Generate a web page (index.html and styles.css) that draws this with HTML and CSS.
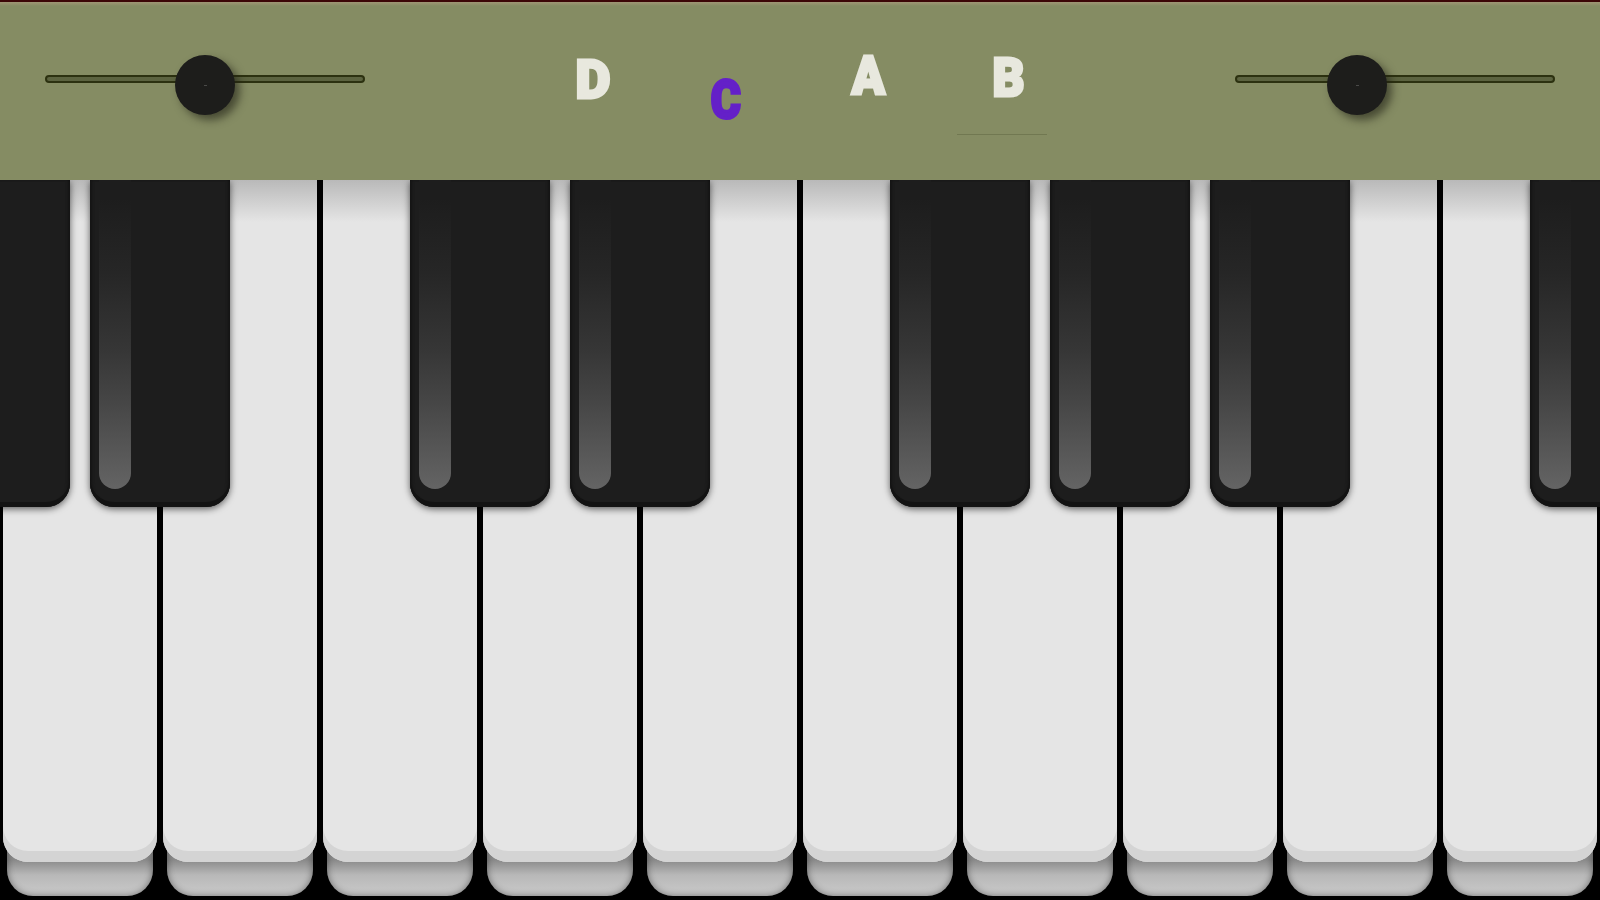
FILE: index.html
```html
<!DOCTYPE html>
<html lang="en">
<head>
<meta charset="utf-8">
<title>Piano</title>
<link rel="stylesheet" href="styles.css">
</head>
<body>
<main class="app">
  <div class="strip"></div>
  <header class="bar">
    <div class="slider"><div class="track"></div><div class="thumb thumb-left"><span class="speck"></span></div></div>
    <div class="notes">
      <div class="note note-d"><span>D</span></div>
      <div class="note note-c"><span>C</span></div>
      <div class="note note-a"><span>A</span></div>
      <div class="note note-b"><span>B</span></div>
    </div>
    <div class="slider slider-end"><div class="track"></div><div class="thumb thumb-right"><span class="speck"></span></div></div>
  </header>
  <section class="keys">
    <div class="whites">
      <div class="white"><div class="face"></div></div>
      <div class="white"><div class="face"></div></div>
      <div class="white"><div class="face"></div></div>
      <div class="white"><div class="face"></div></div>
      <div class="white"><div class="face"></div></div>
      <div class="white"><div class="face"></div></div>
      <div class="white"><div class="face"></div></div>
      <div class="white"><div class="face"></div></div>
      <div class="white"><div class="face"></div></div>
      <div class="white"><div class="face"></div></div>
    </div>
    <div class="blacks">
      <div class="slot"><div class="black"><i class="shine"></i></div></div>
      <div class="slot"><div class="black"><i class="shine"></i></div></div>
      <div class="slot"></div>
      <div class="slot"><div class="black"><i class="shine"></i></div></div>
      <div class="slot"><div class="black"><i class="shine"></i></div></div>
      <div class="slot"></div>
      <div class="slot"><div class="black"><i class="shine"></i></div></div>
      <div class="slot"><div class="black"><i class="shine"></i></div></div>
      <div class="slot"><div class="black"><i class="shine"></i></div></div>
      <div class="slot"></div>
      <div class="slot"><div class="black"><i class="shine"></i></div></div>
    </div>
  </section>
</main>
</body>
</html>
```
FILE: styles.css
```css
* { box-sizing: border-box; }
html, body { margin: 0; padding: 0; background: #000; }
.app { width: 1600px; height: 900px; overflow: hidden; display: flex; flex-direction: column; }
.strip { height: 2px; background: #3c0606; flex: none; }
.bar {
  height: 178px; flex: none; display: flex; align-items: flex-start;
  padding: 73px 45px 0;
  background: linear-gradient(#a09674 0, #858c63 4px);
}
.slider { position: relative; width: 320px; height: 8px; flex: none; }
.slider-end { margin-left: auto; }
.track { height: 8px; border-radius: 4px; background: #5c6340; border: 2px solid #2c3110; }
.thumb {
  position: absolute; top: -20px; width: 60px; height: 60px; border-radius: 50%;
  background: #1d1d1b; box-shadow: 5px 5px 8px rgba(30,30,20,.6);
  display: flex; align-items: center; justify-content: center;
}
.thumb-left { left: 130px; }
.thumb-right { left: 92px; }
.speck { width: 3px; height: 1px; background: #4a4a48; }
.notes {
  margin-left: 178px; width: 504px; height: 100px; flex: none;
  display: grid; grid-template-columns: repeat(4, 90px); column-gap: 48px;
  font-family: Roboto, "Liberation Sans", Arial, sans-serif; font-weight: 900; font-size: 54px; line-height: 60px;
  color: #e8e8de;
}
.note { display: flex; justify-content: center; height: 62px; }
.note span { -webkit-text-stroke: 3px currentColor; }
.note-d { margin-top: -25px; padding-left: 10px; }
.note-c { margin-top: -5px; color: #6420c8; }
.note-c span { transform: scaleX(.85); }
.note-a { margin-top: -29px; padding-left: 8px; }
.note-a span { transform: scaleX(.9); }
.note-b { margin-top: -27px; border-bottom: 1px solid #717851; height: 87px; padding-left: 12px; }
.note-b span { transform: scaleX(.92); }

.keys { position: relative; flex: 1; background: #000; overflow: hidden; isolation: isolate; }
.whites { display: flex; height: 100%; }
.white { width: 160px; flex: none; padding: 0 3px; }
.face {
  height: 682px; border-radius: 0 0 25px 25px; position: relative;
  background: linear-gradient(#b9b9b9, #e5e5e5 42px);
  box-shadow: inset 0 -11px 0 #d4d4d4;
}
.face::after {
  content: ""; position: absolute; left: 4px; right: 4px; bottom: -34px; z-index: -1;
  height: 60px; border-radius: 0 0 26px 26px;
  background: linear-gradient(#8a8a8a 40%, #b8b8b8 65%, #cacaca);
  box-shadow: inset 0 0 7px rgba(0,0,0,.45);
}
.blacks {
  position: absolute; top: 0; left: -80px; width: 1760px; height: 327px;
  display: grid; grid-template-columns: repeat(11, 160px);
}
.slot { display: flex; justify-content: center; }
.black {
  width: 140px; height: 327px; background: #1d1d1d; border-radius: 0 0 24px 24px;
  box-shadow: inset 0 -5px 0 #131313, inset 3px 0 3px -1px #141414, inset -3px 0 3px -1px #141414, 0 2px 7px rgba(0,0,0,.6);
  display: flex; padding-left: 9px;
}
.shine {
  display: block; width: 32px; height: 309px;
  border-radius: 0 0 16px 16px;
  background: linear-gradient(#1d1d1d 6%, #262626 30%, #363636 55%, #464646 72%, #646464 100%);
}
```
